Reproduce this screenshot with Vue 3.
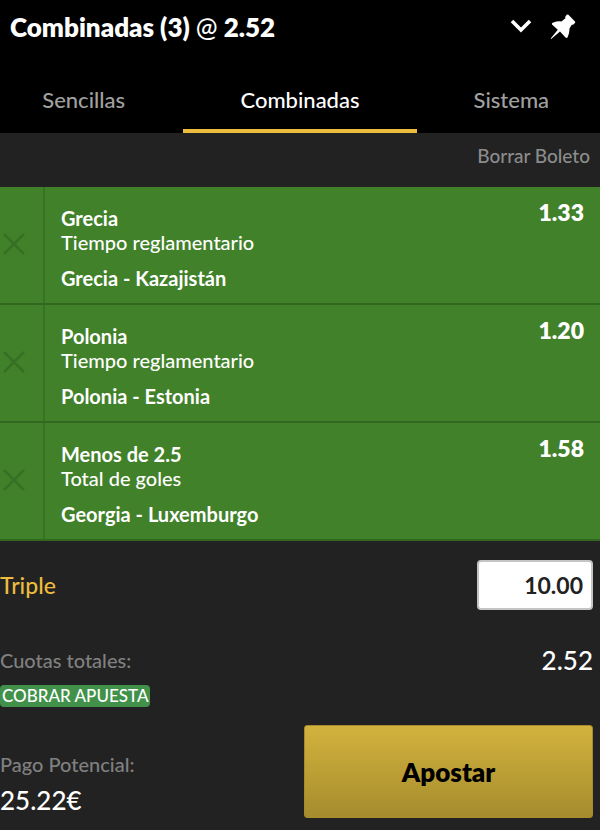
<script setup>
import { ref, computed } from 'vue'

const tabs = ['Sencillas', 'Combinadas', 'Sistema']
const activeTab = ref('Combinadas')
const stake = ref('10.00')
const totalOdds = '2.52'
const payout = '25.22€'
const selections = ref([
  { pick: 'Grecia', market: 'Tiempo reglamentario', event: 'Grecia - Kazajistán', odds: '1.33' },
  { pick: 'Polonia', market: 'Tiempo reglamentario', event: 'Polonia - Estonia', odds: '1.20' },
  { pick: 'Menos de 2.5', market: 'Total de goles', event: 'Georgia - Luxemburgo', odds: '1.58' },
])
const title = computed(() => `Combinadas (${selections.value.length})`)

function removeSelection(index) {
  selections.value.splice(index, 1)
}
</script>

<template>
  <main class="slip">
    <header class="head">
      <div class="title-row">
        <h1 class="title">{{ title }} <span class="at">@</span> {{ totalOdds }}</h1>
        <button class="icon-btn" type="button" aria-label="Minimizar">
          <svg width="22" height="16" viewBox="0 0 22 16">
            <path d="M2 2 L11 11 L20 2" fill="none" stroke="currentColor" stroke-width="3.6" />
          </svg>
        </button>
        <button class="icon-btn" type="button" aria-label="Fijar">
          <svg width="26" height="26" viewBox="0 0 26 26">
            <path
              d="M16.8 0.8 Q17.6 0 18.4 0.8 L25 7.400 Q25.700 8.200 24.900 9.100 L23.400 10.400 Q22.600 11 21.800 10.800 L19.600 14.200 Q19.600 18.500 17.700 23.100 Q16.900 24.600 15.500 23.600 L10 17.600 L1.200 25 L0.700 24.500 L7.800 15.700 L2 10.400 Q1.400 9.300 2.700 8.700 Q7.200 7 11.400 7.400 L15.400 4.200 Q14.900 3 15.700 2 Z"
              fill="currentColor"
            />
          </svg>
        </button>
      </div>
      <nav class="tabs" role="tablist">
        <button
          v-for="tab in tabs"
          :key="tab"
          class="tab"
          :class="{ active: tab === activeTab }"
          type="button"
          role="tab"
          :aria-selected="tab === activeTab"
          @click="activeTab = tab"
        >
          {{ tab }}
        </button>
      </nav>
    </header>

    <div class="toolbar">
      <button class="clear" type="button" @click="selections = []">Borrar Boleto</button>
    </div>

    <ul class="selections">
      <li v-for="(item, index) in selections" :key="item.event" class="selection">
        <button class="remove" type="button" aria-label="Eliminar" @click="removeSelection(index)">
          <svg width="24" height="24" viewBox="0 0 24 24">
            <path d="M2 2 L22 22 M22 2 L2 22" fill="none" stroke="currentColor" stroke-width="2.600" />
          </svg>
        </button>
        <div class="details">
          <strong>{{ item.pick }}</strong>
          <span>{{ item.market }}</span>
          <strong class="event">{{ item.event }}</strong>
        </div>
        <span class="odds">{{ item.odds }}</span>
      </li>
    </ul>

    <section class="summary">
      <div class="row">
        <label class="bet-type" for="stake">Triple</label>
        <input id="stake" v-model="stake" class="stake" type="text" inputmode="decimal" />
      </div>
      <div class="row totals">
        <span class="label">Cuotas totales:</span>
        <span class="amount">{{ totalOdds }}</span>
      </div>
      <span class="badge">COBRAR APUESTA</span>
      <div class="checkout">
        <div class="payout">
          <span class="label">Pago Potencial:</span>
          <span class="amount">{{ payout }}</span>
        </div>
        <button class="submit" type="button">Apostar</button>
      </div>
    </section>
  </main>
</template>

<style>
body {
  margin: 0;
  background: #222;
}
</style>

<style scoped>
.slip {
  font-family: Lato, 'Liberation Sans', sans-serif;
  font-size: 20px;
  font-weight: 500;
  line-height: 24px;
  color: #fff;
  background: #222;
}
button,
input {
  box-sizing: border-box;
  margin: 0;
  padding: 0;
  border: 0;
  background: none;
  color: inherit;
  font: inherit;
}
button {
  cursor: pointer;
}
svg {
  display: block;
}
.head {
  background: #000;
}
.title-row {
  display: flex;
  align-items: center;
  gap: 18px;
  height: 54px;
  padding: 0 24px 0 10px;
}
.title {
  flex: 1;
  margin: 0;
  font-size: 26px;
  line-height: 32px;
  font-weight: 800;
}
.at {
  font-weight: 500;
}
.tabs {
  display: grid;
  grid-template-columns: 11fr 14fr 11fr;
  height: 79px;
}
.tab {
  padding-top: 24px;
  padding-bottom: 8px;
  border-bottom: 4px solid transparent;
  font-size: 22px;
  color: #a0a0a0;
}
.tab:first-child {
  padding-right: 16px;
}
.tab:last-child {
  padding-left: 6px;
}
.tab.active {
  color: #fff;
  border-bottom-color: #ebbc3e;
}
.toolbar {
  display: flex;
  justify-content: flex-end;
  padding: 11px 10px 19px;
}
.clear {
  font-size: 19px;
  color: #8c8c8c;
}
.selections {
  margin: 0;
  padding: 0;
  list-style: none;
}
.selection {
  display: flex;
  background: #41812a;
  border-bottom: 2px solid #31671f;
}
.remove {
  display: flex;
  align-items: center;
  width: 45px;
  padding: 0 0 2px 2px;
  border-right: 2px solid #387324;
  color: #367024;
}
.details {
  display: flex;
  flex: 1;
  flex-direction: column;
  padding: 19px 16px 13px;
}
.details strong {
  font-weight: 700;
}
.event {
  margin-top: 12px;
}
.odds {
  padding: 13px 16px 0 0;
  font-size: 23px;
  font-weight: 800;
}
.summary {
  padding: 19px 7px 12px 0;
}
.row {
  display: flex;
  align-items: center;
  justify-content: space-between;
}
.bet-type {
  font-size: 23px;
  color: #ebbc3e;
}
.stake {
  width: 116px;
  height: 50px;
  padding: 0 8px;
  border: 2px solid #c4c4c4;
  border-radius: 4px;
  background: #fff;
  color: #222;
  font-size: 23px;
  font-weight: 700;
  text-align: right;
}
.totals {
  padding: 34px 0 6px;
}
.label {
  color: #808080;
}
.amount {
  font-size: 26px;
  line-height: 32px;
}
.badge {
  display: inline-block;
  padding: 0 2px;
  border-radius: 4px;
  background: #41914a;
  font-size: 17px;
  line-height: 22px;
}
.checkout {
  display: grid;
  grid-template-columns: 304fr 289fr;
  align-items: end;
  margin-top: 18px;
}
.payout {
  display: flex;
  flex-direction: column;
  gap: 8px;
  padding-bottom: 2px;
}
.submit {
  height: 93px;
  border: 1px solid #a8892b;
  border-radius: 3px;
  background: linear-gradient(#d3b33f, #a58c2c);
  color: #000;
  font-size: 26px;
  font-weight: 800;
}
</style>
